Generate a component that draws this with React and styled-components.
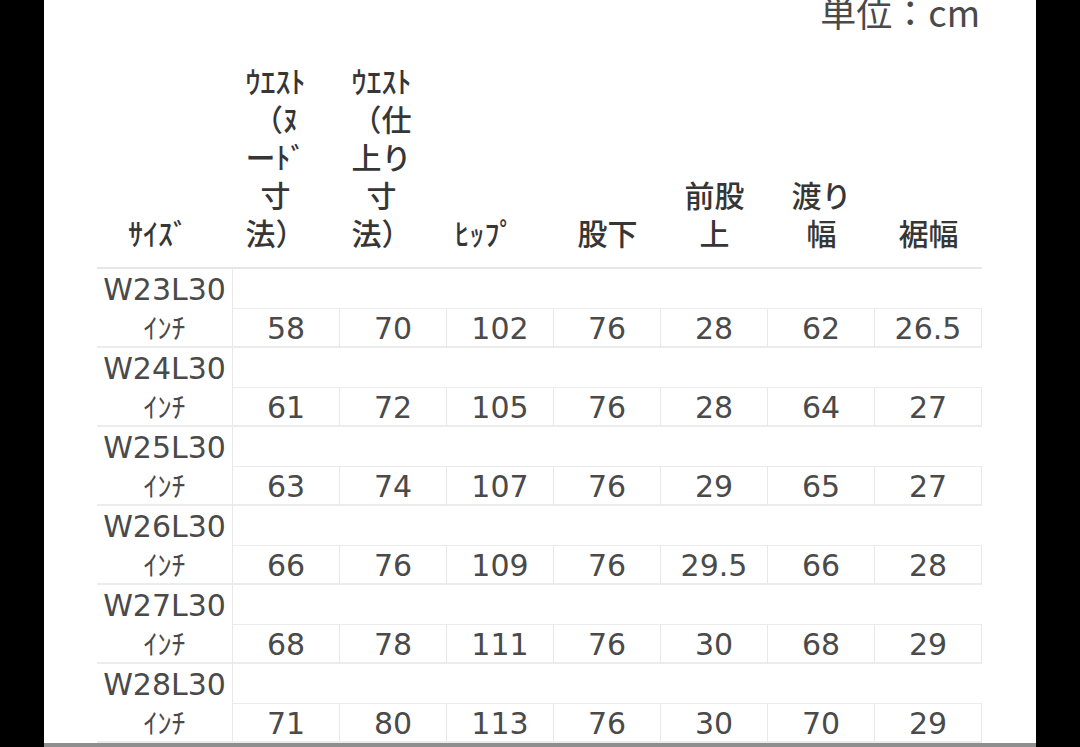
import React from "react";
import styled, { createGlobalStyle } from "styled-components";

const GlobalStyle = createGlobalStyle`
  html, body {
    margin: 0;
    padding: 0;
    background: #000;
    overflow: hidden;
  }
`;

const headers = [
  { lines: ["ｻｲｽﾞ"], pad: 14 },
  { lines: ["ｳｴｽﾄ", "（ﾇ", "ーﾄﾞ", "寸", "法）"], pad: 22 },
  { lines: ["ｳｴｽﾄ", "（仕", "上り", "寸", "法）"], pad: 24 },
  { lines: ["ﾋｯﾌﾟ"], pad: 32 },
  { lines: ["股下"], pad: 0 },
  { lines: ["前股", "上"], pad: 0 },
  { lines: ["渡り", "幅"], pad: 0 },
  { lines: ["裾幅"], pad: 0 },
];

const sizes = [
  { name: "W23L30", values: ["58", "70", "102", "76", "28", "62", "26.5"] },
  { name: "W24L30", values: ["61", "72", "105", "76", "28", "64", "27"] },
  { name: "W25L30", values: ["63", "74", "107", "76", "29", "65", "27"] },
  { name: "W26L30", values: ["66", "76", "109", "76", "29.5", "66", "28"] },
  { name: "W27L30", values: ["68", "78", "111", "76", "30", "68", "29"] },
  { name: "W28L30", values: ["71", "80", "113", "76", "30", "70", "29"] },
];

export default function App() {
  return (
    <>
      <GlobalStyle />
      <Panel>
        <Caption>単位：cm</Caption>
        <Table>
          {headers.map((h, i) => (
            <HeadCell key={i} pad={h.pad}>
              {h.lines.map((line, j) => (
                <HeadLine key={j}>{line}</HeadLine>
              ))}
            </HeadCell>
          ))}
          {sizes.map((size) => (
            <React.Fragment key={size.name}>
              <SizeLabel>{size.name}</SizeLabel>
              <LabelFill />
              <UnitCell>ｲﾝﾁ</UnitCell>
              {size.values.map((v, k) => (
                <ValueCell key={k}>{v}</ValueCell>
              ))}
            </React.Fragment>
          ))}
        </Table>
      </Panel>
    </>
  );
}

const Panel = styled.div`
  box-sizing: border-box;
  width: 992px;
  height: 747px;
  margin: 0 44px;
  padding: 0 54px 0 53px;
  background: #fff;
  border-bottom: 4px solid #8e8e8e;
  display: flex;
  flex-direction: column;
  overflow: hidden;
`;

const Caption = styled.div`
  margin-top: -7px;
  height: 38px;
  text-align: right;
  font-family: "Noto Sans CJK JP", "Noto Sans", sans-serif;
  font-size: 36px;
  line-height: 36px;
  color: #4a4a4a;
  padding-right: 2px;
`;

const Table = styled.div`
  display: grid;
  grid-template-columns: 136px repeat(7, 107px);
  grid-template-rows: 238px;
  grid-auto-rows: 39px 40px;
`;

const HeadCell = styled.div`
  box-sizing: border-box;
  display: flex;
  flex-direction: column;
  justify-content: flex-end;
  align-items: center;
  padding: 0 ${(p) => p.pad}px 16px 0;
  border-bottom: 2px solid #e6e6e6;
  font-family: "Noto Sans CJK JP", sans-serif;
  font-weight: 500;
  font-size: 30px;
  color: #363636;
`;

const HeadLine = styled.span`
  display: block;
  height: 38px;
  line-height: 38px;
  white-space: nowrap;
`;

const SizeLabel = styled.div`
  box-sizing: border-box;
  grid-column: 1;
  display: flex;
  align-items: center;
  justify-content: center;
  border-right: 1px solid #e8e8e8;
  font-family: "DejaVu Sans", "Noto Sans", sans-serif;
  font-size: 30px;
  color: #4a4a4a;
  padding-top: 2px;
`;

const LabelFill = styled.div`
  grid-column: 2 / -1;
`;

const UnitCell = styled.div`
  box-sizing: border-box;
  grid-column: 1;
  display: flex;
  align-items: center;
  justify-content: center;
  border-right: 1px solid #e8e8e8;
  border-bottom: 2px solid #ececec;
  font-family: "Noto Sans CJK JP", sans-serif;
  font-size: 28px;
  color: #4a4a4a;
`;

const ValueCell = styled.div`
  box-sizing: border-box;
  display: flex;
  align-items: center;
  justify-content: center;
  padding-top: 2px;
  border-top: 1px solid #ececec;
  border-right: 1px solid #e8e8e8;
  border-bottom: 2px solid #ececec;
  font-family: "DejaVu Sans", "Noto Sans", sans-serif;
  font-size: 30px;
  color: #4a4a4a;
`;
